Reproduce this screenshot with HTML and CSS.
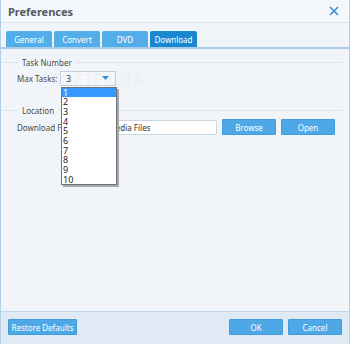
FILE: index.html
```html
<!DOCTYPE html>
<html lang="en">
<head>
    <meta charset="UTF-8">
    <title>Preferences</title>
    <link rel="stylesheet" href="styles.css">
</head>
<body>
    <div class="window">
        <div class="titlebar">
            <span class="title">Preferences</span>
            <svg class="close" width="10" height="10" viewBox="0 0 10 10">
                <path d="M1 1 L9 9 M9 1 L1 9" stroke="#3a8fd2" stroke-width="1.6" fill="none"/>
            </svg>
        </div>

        <div class="tabs">
            <div class="tab">General</div>
            <div class="tab">Convert</div>
            <div class="tab">DVD</div>
            <div class="tab active">Download</div>
        </div>

        <div class="content">
            <div class="group-head"><span>Task Number</span></div>
            <div class="row row-tasks">
                <label>Max Tasks:</label>
                <div class="select">
                    <span>3</span>
                    <svg width="7" height="4" viewBox="0 0 7 4"><path d="M0 0 H7 L3.5 4 Z" fill="#2d8ad6"/></svg>
                    <div class="options">
                        <div class="opt sel">1</div>
                        <div class="opt">2</div>
                        <div class="opt">3</div>
                        <div class="opt">4</div>
                        <div class="opt">5</div>
                        <div class="opt">6</div>
                        <div class="opt">7</div>
                        <div class="opt">8</div>
                        <div class="opt">9</div>
                        <div class="opt">10</div>
                    </div>
                </div>
                <span class="watermark">SOFTPEDIA</span>
            </div>

            <div class="group-head"><span>Location</span></div>
            <div class="row row-folder">
                <label>Download Folder:</label>
                <div class="input">Softpedia Files</div>
                <button class="btn">Browse</button>
                <button class="btn">Open</button>
            </div>
        </div>

        <div class="footer">
            <button class="btn btn-wide">Restore Defaults</button>
            <div class="footer-right">
                <button class="btn">OK</button>
                <button class="btn">Cancel</button>
            </div>
        </div>
    </div>
</body>
</html>
```

FILE: styles.css
```css
* {
    margin: 0;
    padding: 0;
    box-sizing: border-box;
}

body {
    font-family: 'Noto Sans', 'DejaVu Sans', sans-serif;
    font-size: 8px;
    color: #4a4a4a;
    background: #ffffff;
}

.window {
    width: 350px;
    height: 344px;
    display: flex;
    flex-direction: column;
    background: #f1f5f9;
    border-left: 1px solid #b3cde2;
    border-right: 1px solid #b3cde2;
}

.titlebar {
    height: 23px;
    display: flex;
    align-items: center;
    justify-content: space-between;
    padding: 0 10px 0 7px;
    background: #f4f8fc;
    border-bottom: 1px solid #d6e2ec;
}

.title {
    font-size: 11px;
    font-weight: bold;
    color: #555a60;
}

.tabs {
    display: flex;
    gap: 2px;
    padding: 8px 0 0 5px;
    border-bottom: 2px solid #a7cceb;
}

.tab {
    width: 46px;
    height: 16px;
    display: flex;
    align-items: center;
    justify-content: center;
    background: #53ade8;
    color: #ffffff;
    border-radius: 2px 2px 0 0;
}

.tab.active {
    width: 47px;
    background: #1a87d1;
}

.content {
    flex: 1;
    padding-top: 7px;
}

.group-head {
    display: flex;
    align-items: center;
    height: 12px;
    margin-right: 6px;
    color: #4a4a4a;
}

.group-head::before {
    content: "";
    width: 17px;
    border-top: 1px solid #dde5ec;
}

.group-head::after {
    content: "";
    flex: 1;
    border-top: 1px solid #dde5ec;
}

.group-head span {
    padding: 0 4px;
}

.row {
    display: flex;
    align-items: center;
    padding-left: 16px;
    position: relative;
}

.row-tasks {
    height: 16px;
    margin: 2px 0 18px;
}

.row-tasks label {
    width: 43px;
}

.select {
    position: relative;
    width: 56px;
    height: 15px;
    display: flex;
    align-items: center;
    justify-content: space-between;
    padding: 0 6px 0 5px;
    border: 1px solid #c2d0dc;
    background: #f6f8fa;
    color: #333;
    font-size: 9px;
}

.options {
    position: absolute;
    left: 0;
    top: 15px;
    width: 56px;
    background: #ffffff;
    border: 1px solid #6f7378;
    box-shadow: 2px 2px 0 #a8a8a8;
    z-index: 2;
}

.opt {
    height: 9.7px;
    line-height: 9.7px;
    padding-left: 1px;
    font-size: 9px;
    color: #2a2218;
}

.opt.sel {
    background: #3399ff;
    color: #ffffff;
}

.watermark {
    position: absolute;
    left: 50px;
    top: -2px;
    font-size: 17px;
    font-weight: bold;
    color: rgba(200, 210, 220, 0.15);
}

.row-folder {
    height: 16px;
    margin-top: 3px;
}

.row-folder label {
    width: 75px;
}

.input {
    width: 125px;
    height: 15px;
    display: flex;
    align-items: center;
    padding-left: 3px;
    background: #ffffff;
    border: 1px solid #c9d5df;
    border-radius: 2px;
    color: #333;
}

.btn {
    width: 54px;
    height: 16px;
    background: #4ea8e5;
    border: 1px solid #3f9bd9;
    border-radius: 1px;
    color: #ffffff;
    font-family: inherit;
    font-size: 8px;
}

.row-folder .btn {
    margin-left: 5px;
}

.footer {
    height: 33px;
    display: flex;
    align-items: center;
    justify-content: space-between;
    padding: 0 7px 2px 7px;
    background: #dfeaf4;
    border-top: 1px solid #c1d6e8;
}

.btn-wide {
    width: 69px;
}

.footer-right {
    display: flex;
    gap: 5px;
}
```
